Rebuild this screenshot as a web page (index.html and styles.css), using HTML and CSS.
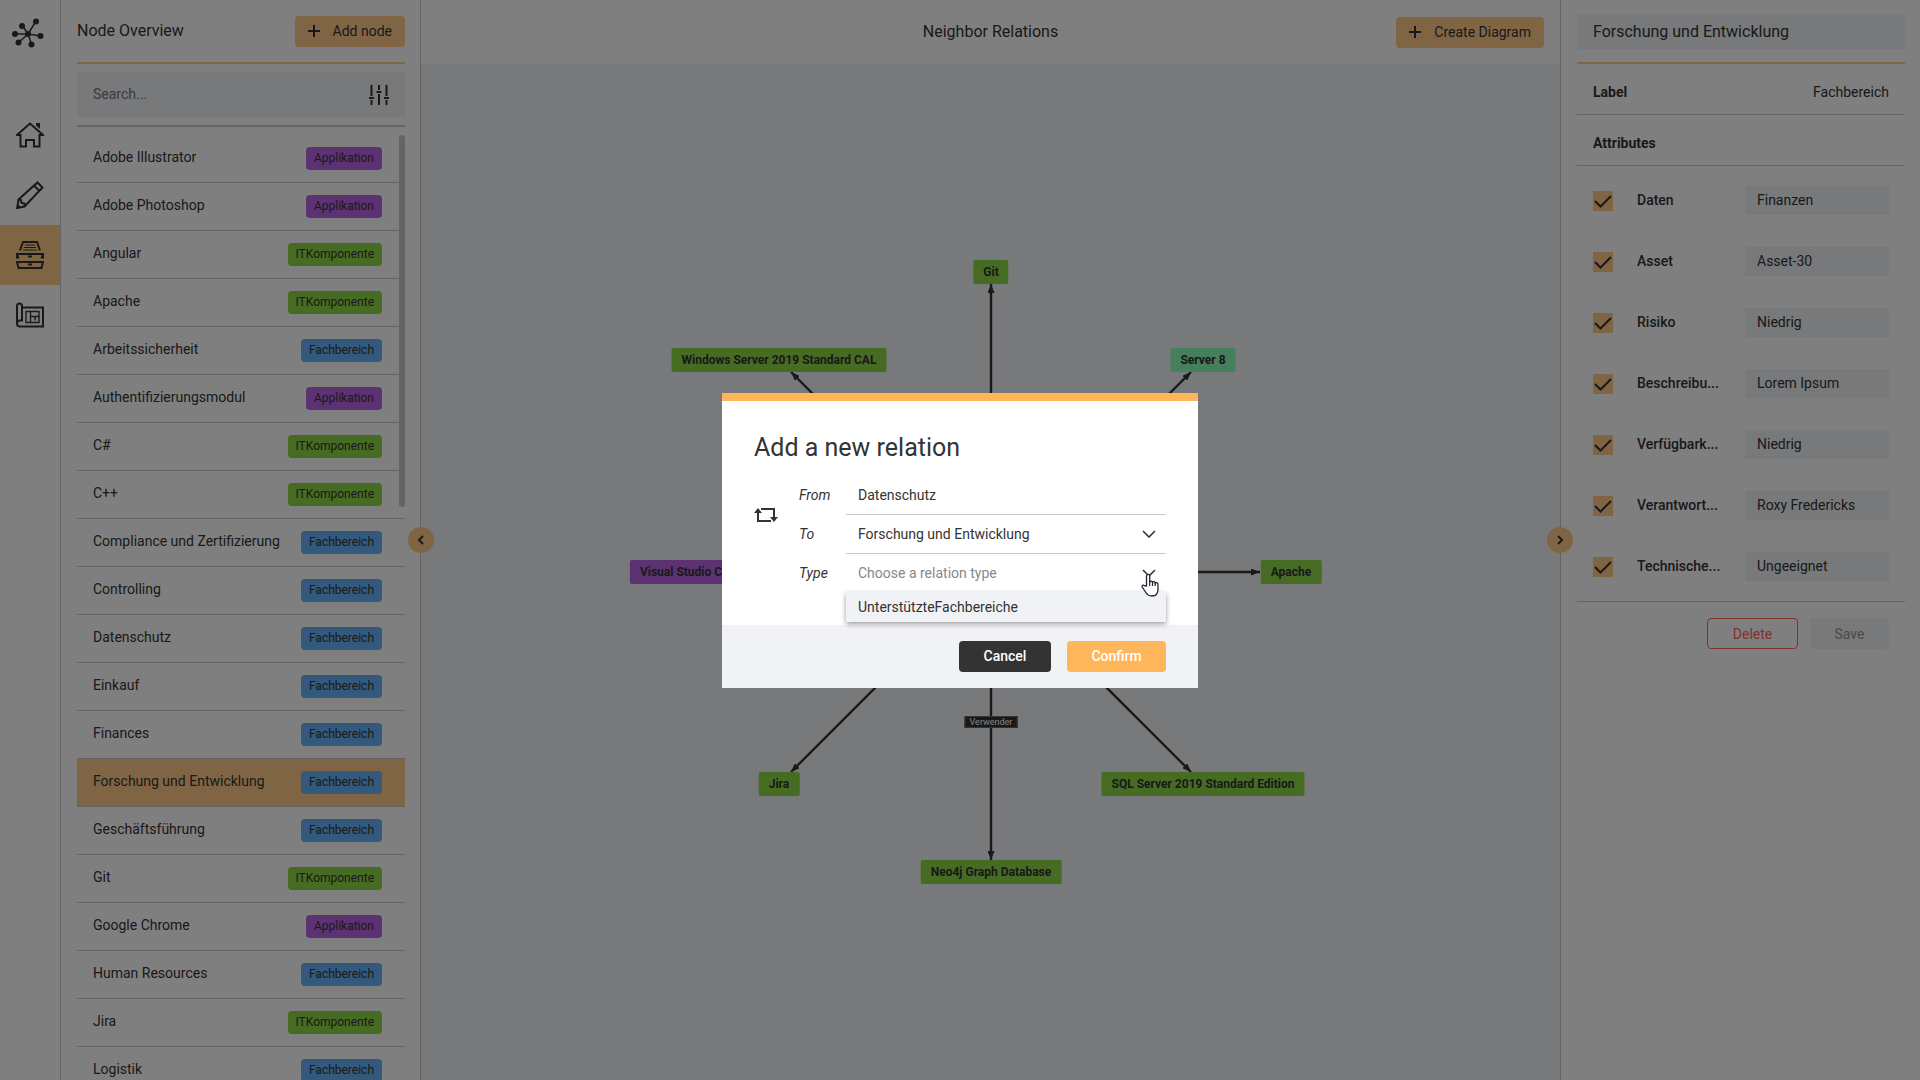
FILE: index.html
```
<!DOCTYPE html>
<html lang="en">
<head>
<meta charset="utf-8">
<title>Node Overview</title>
<link rel="stylesheet" href="styles.css">
</head>
<body>
<div class="app">
  <nav class="rail" aria-label="Main">
    <a class="rail-logo" href="#" aria-label="Start">
      <svg width="34" height="32" viewBox="0 0 34 32">
        <path d="M17 17 25 4M17 17 11 8M17 17H4M17 17l12.500 2M17 17 7 26M17 17l3.500 10" stroke="currentColor" stroke-width="1.500" fill="none"/>
        <g fill="currentColor"><circle cx="17" cy="17" r="3"/><circle cx="25" cy="4.500" r="3"/><circle cx="11" cy="9" r="3"/><circle cx="4" cy="17" r="3"/><circle cx="29.500" cy="19" r="3"/><circle cx="7.500" cy="25.500" r="3"/><circle cx="20.500" cy="27.500" r="3"/></g>
      </svg>
    </a>
    <a class="rail-item" href="#" aria-label="Home">
      <svg width="28" height="28" viewBox="0 0 28 28" fill="none" stroke="currentColor" stroke-width="2"><path d="M1 14h3.500v11.500H10V19h8v6.500h5.500V14H27L14 2.500z"/><path d="M20 2h4v6l-4-3.500z" fill="currentColor" stroke="none"/></svg>
    </a>
    <a class="rail-item" href="#" aria-label="Edit">
      <svg width="28" height="28" viewBox="0 0 28 28" fill="none" stroke="currentColor" stroke-width="2"><path d="M2.500 18.500 21.500 1.500l5 5L8.500 25.500 1.200 27zM18 4.500l5.500 5.500M2.500 18.500l2.500.5.500 3 3 .5v3"/><path d="M1 27.500v-5l4.500 4z" fill="currentColor" stroke="none"/></svg>
    </a>
    <a class="rail-item rail-item-active" href="#" aria-label="Nodes">
      <svg width="28" height="28" viewBox="0 0 28 28" fill="none" stroke="currentColor" stroke-width="2"><path d="M4 9.500 7 1h14l3 8.500M1 17.500V13h26v4.500M1 13l1.500 4.500M27 13l-1.500 4.500M1 21h26l-1.500 6h-23z"/><path d="M9 4h10M8 6.500h12M7 9h14" stroke-width="1.200"/><path d="M12 15.500h4M12 23.500h4"/></svg>
    </a>
    <a class="rail-item" href="#" aria-label="Diagrams">
      <svg width="28" height="28" viewBox="0 0 28 28" fill="none" stroke="currentColor" stroke-width="2"><path d="M6 6.500h21v19H4a3 3 0 0 1-3-3V5a2.500 2.500 0 0 1 5 0v14.500H4a3 3 0 0 0-3 3"/><path d="M10 10.500h13v11H10zM14.500 10.500v11M14.500 15.500H23M19 15.500v4" stroke-width="1.400"/></svg>
    </a>
  </nav>

  <aside class="panel panel-left">
    <header class="panel-head">
      <h2 class="heading">Node Overview</h2>
      <button class="btn btn-soft" type="button"><svg width="12" height="12" viewBox="0 0 12 12"><path d="M6 0v12M0 6h12" stroke="currentColor" stroke-width="2"/></svg>Add node</button>
    </header>
    <div class="search">
      <input class="search-input" type="text" placeholder="Search..." aria-label="Search">
      <button class="icon-btn" type="button" aria-label="Filter"><svg width="20" height="20" viewBox="0 0 20 20"><path d="M2.500 0v11M2.500 15v5M10 0v5M10 9v11M17.500 0v11M17.500 15v5M0 13h5M7.500 7h5M15 13h5" stroke="currentColor" stroke-width="2"/></svg></button>
    </div>
    <ul class="node-list">
      <li><button class="node-row" type="button">Adobe Illustrator<span class="badge app-kind">Applikation</span></button></li>
      <li><button class="node-row" type="button">Adobe Photoshop<span class="badge app-kind">Applikation</span></button></li>
      <li><button class="node-row" type="button">Angular<span class="badge it-kind">ITKomponente</span></button></li>
      <li><button class="node-row" type="button">Apache<span class="badge it-kind">ITKomponente</span></button></li>
      <li><button class="node-row" type="button">Arbeitssicherheit<span class="badge dept-kind">Fachbereich</span></button></li>
      <li><button class="node-row" type="button">Authentifizierungsmodul<span class="badge app-kind">Applikation</span></button></li>
      <li><button class="node-row" type="button">C#<span class="badge it-kind">ITKomponente</span></button></li>
      <li><button class="node-row" type="button">C++<span class="badge it-kind">ITKomponente</span></button></li>
      <li><button class="node-row" type="button">Compliance und Zertifizierung<span class="badge dept-kind">Fachbereich</span></button></li>
      <li><button class="node-row" type="button">Controlling<span class="badge dept-kind">Fachbereich</span></button></li>
      <li><button class="node-row" type="button">Datenschutz<span class="badge dept-kind">Fachbereich</span></button></li>
      <li><button class="node-row" type="button">Einkauf<span class="badge dept-kind">Fachbereich</span></button></li>
      <li><button class="node-row" type="button">Finances<span class="badge dept-kind">Fachbereich</span></button></li>
      <li><button class="node-row node-row-active" type="button">Forschung und Entwicklung<span class="badge dept-kind">Fachbereich</span></button></li>
      <li><button class="node-row" type="button">Geschäftsführung<span class="badge dept-kind">Fachbereich</span></button></li>
      <li><button class="node-row" type="button">Git<span class="badge it-kind">ITKomponente</span></button></li>
      <li><button class="node-row" type="button">Google Chrome<span class="badge app-kind">Applikation</span></button></li>
      <li><button class="node-row" type="button">Human Resources<span class="badge dept-kind">Fachbereich</span></button></li>
      <li><button class="node-row" type="button">Jira<span class="badge it-kind">ITKomponente</span></button></li>
      <li><button class="node-row" type="button">Logistik<span class="badge dept-kind">Fachbereich</span></button></li>
    </ul>
    <button class="toggle toggle-left" type="button" aria-label="Collapse list"><svg width="8" height="10" viewBox="0 0 8 10"><path d="M6 1 2 5l4 4" fill="none" stroke="currentColor" stroke-width="2"/></svg></button>
  </aside>

  <main class="center">
    <header class="center-head">
      <h1 class="heading center-title">Neighbor Relations</h1>
      <button class="btn btn-soft center-action" type="button"><svg width="12" height="12" viewBox="0 0 12 12"><path d="M6 0v12M0 6h12" stroke="currentColor" stroke-width="2"/></svg>Create Diagram</button>
    </header>
    <div class="canvas">
      <div class="graph">
        <svg class="edges" width="741" height="624" viewBox="0 0 741 624">
          <defs><marker id="tip" viewBox="0 0 9 7" refX="9" refY="3.500" markerWidth="9" markerHeight="7" markerUnits="userSpaceOnUse" orient="auto"><path d="M0 0 9 3.500 0 7z" fill="#333"/></marker></defs>
          <g stroke="#333" stroke-width="2.400" marker-end="url(#tip)">
            <path d="M371 312V24"/><path d="M371 312 571 112"/><path d="M371 312h269"/><path d="M371 312l200 200"/>
            <path d="M371 312v288"/><path d="M371 312 171 512"/><path d="M371 312H133"/><path d="M371 312 171 112"/>
          </g>
        </svg>
        <span class="gnode it-kind pos-n">Git</span>
        <span class="gnode server-kind pos-ne">Server 8</span>
        <span class="gnode it-kind pos-e">Apache</span>
        <span class="gnode it-kind pos-se">SQL Server 2019 Standard Edition</span>
        <span class="gnode it-kind pos-s">Neo4j Graph Database</span>
        <span class="gnode it-kind pos-sw">Jira</span>
        <span class="gnode app-kind pos-w">Visual Studio Code</span>
        <span class="gnode it-kind pos-nw">Windows Server 2019 Standard CAL</span>
        <span class="edge-label">Verwender</span>
      </div>
    </div>
  </main>

  <aside class="panel panel-right">
    <header class="panel-head">
      <input class="title-input" type="text" value="Forschung und Entwicklung" aria-label="Name">
    </header>
    <div class="info-row"><strong>Label</strong><span>Fachbereich</span></div>
    <div class="info-row"><strong>Attributes</strong></div>
    <div class="attributes">
      <div class="attribute"><input class="check" id="c1" type="checkbox" checked><label for="c1">Daten</label><input class="value" value="Finanzen" aria-label="Daten"></div>
      <div class="attribute"><input class="check" id="c2" type="checkbox" checked><label for="c2">Asset</label><input class="value" value="Asset-30" aria-label="Asset"></div>
      <div class="attribute"><input class="check" id="c3" type="checkbox" checked><label for="c3">Risiko</label><input class="value" value="Niedrig" aria-label="Risiko"></div>
      <div class="attribute"><input class="check" id="c4" type="checkbox" checked><label for="c4">Beschreibu...</label><input class="value" value="Lorem Ipsum" aria-label="Beschreibung"></div>
      <div class="attribute"><input class="check" id="c5" type="checkbox" checked><label for="c5">Verfügbark...</label><input class="value" value="Niedrig" aria-label="Verfügbarkeit"></div>
      <div class="attribute"><input class="check" id="c6" type="checkbox" checked><label for="c6">Verantwort...</label><input class="value" value="Roxy Fredericks" aria-label="Verantwortlich"></div>
      <div class="attribute"><input class="check" id="c7" type="checkbox" checked><label for="c7">Technische...</label><input class="value" value="Ungeeignet" aria-label="Technische Eignung"></div>
    </div>
    <footer class="panel-actions">
      <button class="btn btn-delete" type="button">Delete</button>
      <button class="btn btn-save" type="button" disabled>Save</button>
    </footer>
    <button class="toggle toggle-right" type="button" aria-label="Collapse details"><svg width="8" height="10" viewBox="0 0 8 10"><path d="M2 1l4 4-4 4" fill="none" stroke="currentColor" stroke-width="2"/></svg></button>
  </aside>
</div>

<div class="backdrop">
  <form class="dialog" role="dialog" aria-labelledby="dialog-title">
    <div class="dialog-body">
      <h2 class="dialog-title" id="dialog-title">Add a new relation</h2>
      <div class="fields">
        <button class="icon-btn swap" type="button" aria-label="Swap direction"><svg width="24" height="14" viewBox="0 0 24 14"><path d="M4 3v10h13M7 1h13v10" fill="none" stroke="currentColor" stroke-width="2"/><path d="M0 5 4 0l4 5zM16 9l4 5 4-5z" fill="currentColor"/></svg></button>
        <label class="field-label" for="from">From</label>
        <div class="field"><input class="control" id="from" type="text" value="Datenschutz" readonly></div>
        <label class="field-label" for="to">To</label>
        <div class="field">
          <select class="control" id="to"><option>Forschung und Entwicklung</option></select>
          <svg class="chevron" width="14" height="8" viewBox="0 0 14 8"><path d="M1 1l6 6 6-6" fill="none" stroke="currentColor" stroke-width="1.600"/></svg>
        </div>
        <label class="field-label" for="type">Type</label>
        <div class="field">
          <select class="control control-empty" id="type"><option>Choose a relation type</option></select>
          <svg class="chevron" width="14" height="8" viewBox="0 0 14 8"><path d="M1 1l6 6 6-6" fill="none" stroke="currentColor" stroke-width="1.600"/></svg>
          <ul class="options" role="listbox" aria-label="Relation types"><li role="option" aria-selected="true">UnterstützteFachbereiche</li></ul>
          <svg class="pointer" width="18" height="24" viewBox="0 0 18 24"><path d="M5.500 13V3a1.600 1.600 0 0 1 3.200 0v6c.3-1.300 2.600-1.200 2.800.3.500-1 2.500-.8 2.700.7.600-.8 2.800-.6 2.800 1.400v4.600c0 4-2 7-6 7-3.500 0-5-1.500-6.500-4L1.200 14c-.6-1.300 1-2.500 2.300-1.300z" fill="#fff" stroke="#1d2430" stroke-width="1.300"/><path d="M8.700 9v4M11.500 9.500V13M14.200 10v3" stroke="#1d2430" stroke-width="1.200"/></svg>
        </div>
      </div>
    </div>
    <footer class="dialog-actions">
      <button class="btn btn-dark" type="button">Cancel</button>
      <button class="btn btn-primary" type="button">Confirm</button>
    </footer>
  </form>
</div>
</body>
</html>
```
FILE: styles.css
```
:root {
  --ink: #333;
  --line: #c8c8c8;
  --tint: #f1f2f5;
  --accent: #ffb55a;
  --accent-soft: #ffca88;
}

* { box-sizing: border-box; }

body {
  margin: 0;
  color: var(--ink);
  font: 14px/20px Roboto, "Noto Sans", sans-serif;
}

button, input, select { margin: 0; color: inherit; font: inherit; }
h1, h2, ul { margin: 0; padding: 0; font-weight: 400; list-style: none; }
svg { display: block; flex: none; }
strong, label { font-weight: 500; }

.app { display: flex; height: 100vh; overflow: hidden; background: #fff; }

/* Icon rail */
.rail { flex: none; width: 61px; border-right: 1px solid var(--line); }
.rail a { display: flex; justify-content: center; height: 60px; color: inherit; }
.rail .rail-logo { height: 105px; padding: 17px 0 0 11px; justify-content: flex-start; }
.rail-item { align-items: center; }
.rail-item-active { background: var(--accent-soft); }

/* Side panels */
.panel { position: relative; display: flex; flex-direction: column; flex: none; width: 360px; padding: 0 15px 0 16px; }
.panel-left { border-right: 1px solid var(--line); }
.panel-right { border-left: 1px solid var(--line); }
.panel-head { display: flex; flex: none; align-items: center; justify-content: space-between; height: 64px; border-bottom: 2px solid var(--accent-soft); }
.heading { font-size: 16px; line-height: 24px; }

.btn { display: inline-flex; align-items: center; justify-content: center; gap: 13px; height: 31px; padding: 0 13px; border: 0; border-radius: 4px; }
.btn-soft { background: var(--accent-soft); }
.icon-btn { padding: 0; border: 0; background: none; }

.toggle { position: absolute; top: 50%; display: grid; place-items: center; width: 26px; height: 26px; margin-top: -13px; padding: 0; border: 0; border-radius: 50%; background: var(--accent-soft); z-index: 1; }
.toggle-left { right: -14px; }
.toggle-right { left: -14px; }

.search { display: flex; flex: none; align-items: center; height: 45px; margin: 8px 0; padding: 0 16px; background: var(--tint); }
.search-input { flex: 1; min-width: 0; padding: 0 0 2px; border: 0; background: none; }
.search-input::placeholder { color: #757575; opacity: 1; }

.node-list { position: relative; flex: 1; min-height: 0; overflow: hidden; border-top: 2px solid var(--line); padding-top: 8px; }
.node-list::after { content: ""; position: absolute; top: 8px; right: 0; width: 6px; height: 39%; border-radius: 3px; background: var(--line); }
.node-row { display: flex; align-items: baseline; justify-content: space-between; width: 100%; height: 48px; padding: 12px 23px 0 16px; border: 0; border-bottom: 1px solid var(--line); background: none; text-align: left; }
.node-row-active { background: var(--accent-soft); }
.badge { padding: 0 8px; border-radius: 4px; font-size: 12px; line-height: 23px; }

.app-kind { background: #b865e4; }
.it-kind { background: #8cd644; }
.dept-kind { background: #66b2f8; }
.server-kind { background: #8afebb; }

/* Diagram */
.center { display: flex; flex: 1; flex-direction: column; min-width: 0; }
.center-head { display: grid; grid-template-columns: 1fr auto 1fr; align-items: center; flex: none; height: 64px; padding: 0 16px; }
.center-title { grid-column: 2; }
.center-action { justify-self: end; }
.canvas { display: grid; flex: 1; place-items: center; min-height: 0; overflow: hidden; background: var(--tint); }
.graph { position: relative; }
.gnode, .edge-label { position: absolute; transform: translate(-50%, -50%); white-space: nowrap; }
.gnode { padding: 0 10px; border-radius: 2px; font-size: 12px; font-weight: 700; line-height: 24px; }
.pos-n { left: 371px; top: 12px; }
.pos-ne { left: 583px; top: 100px; }
.pos-e { left: 671px; top: 312px; }
.pos-se { left: 583px; top: 524px; }
.pos-s { left: 371px; top: 612px; }
.pos-sw { left: 159px; top: 524px; }
.pos-w { left: 71px; top: 312px; }
.pos-nw { left: 159px; top: 100px; }
.edge-label { left: 371px; top: 462px; padding: 0 4px; border: 1px solid #666; background: var(--ink); color: #fff; font-size: 9px; line-height: 10px; }

/* Node details */
.title-input { width: 100%; height: 35px; padding: 0 16px; border: 0; background: var(--tint); font-size: 16px; }
.info-row { display: flex; flex: none; align-items: center; justify-content: space-between; height: 51px; padding: 6px 16px 0; border-bottom: 1px solid var(--line); }
.info-row strong { font-weight: 700; }
.attributes { padding: 4px 16px; border-bottom: 1px solid var(--line); }
.attribute { display: grid; grid-template-columns: 20px 1fr 144px; align-items: center; column-gap: 24px; height: 61px; }
.attribute label { padding-bottom: 2px; }
.value { width: 100%; height: 29px; padding: 0 12px 2px; border: 0; background: var(--tint); }
.check { width: 20px; height: 20px; appearance: none; background: var(--accent-soft) url("data:image/svg+xml,%3Csvg xmlns='http://www.w3.org/2000/svg' viewBox='0 0 20 20'%3E%3Cpath d='M2 10l5.500 5.500L18 5' fill='none' stroke='%23333' stroke-width='2'/%3E%3C/svg%3E"); }
.panel-actions { display: flex; justify-content: flex-end; gap: 12px; padding: 16px; }
.btn-delete { min-width: 91px; border: 1px solid #ff6557; background: none; color: #ff6557; }
.btn-save { min-width: 79px; background: var(--tint); color: #969696; }

/* Dialog */
.backdrop { position: fixed; inset: 0; display: grid; place-items: center; background: rgba(0, 0, 0, .5); z-index: 2; }
.dialog { width: 476px; border-top: 8px solid var(--accent); background: #fff; }
.dialog-body { padding: 32px; }
.dialog-title { margin-bottom: 14px; font-size: 25px; line-height: 29px; }
.fields { display: grid; grid-template-columns: 45px 47px 1fr; grid-auto-rows: 39px; align-items: center; }
.swap { grid-row: 1 / 3; justify-self: start; }
.field-label { grid-column: 2; font-style: italic; font-weight: 400; }
.field { position: relative; display: flex; align-items: center; grid-column: 3; height: 100%; border-bottom: 1px solid var(--line); }
.control { flex: 1; min-width: 0; height: 100%; padding: 0 12px; border: 0; outline: 0; background: none; appearance: none; }
.control-empty { color: #888; }
.chevron { position: absolute; right: 10px; pointer-events: none; }
.options { position: absolute; top: 100%; left: 0; right: 0; background: var(--tint); box-shadow: 0 2px 5px rgba(0, 0, 0, .4); }
.options li { padding: 0 12px; line-height: 30px; }
.pointer { position: absolute; top: 19px; right: 7px; pointer-events: none; }
.dialog-actions { display: flex; justify-content: flex-end; gap: 16px; padding: 16px 32px; background: var(--tint); }
.dialog-actions .btn { font-weight: 500; }
.btn-dark { min-width: 92px; background: var(--ink); color: #fff; }
.btn-primary { min-width: 99px; background: var(--accent); color: #fff; }
```
